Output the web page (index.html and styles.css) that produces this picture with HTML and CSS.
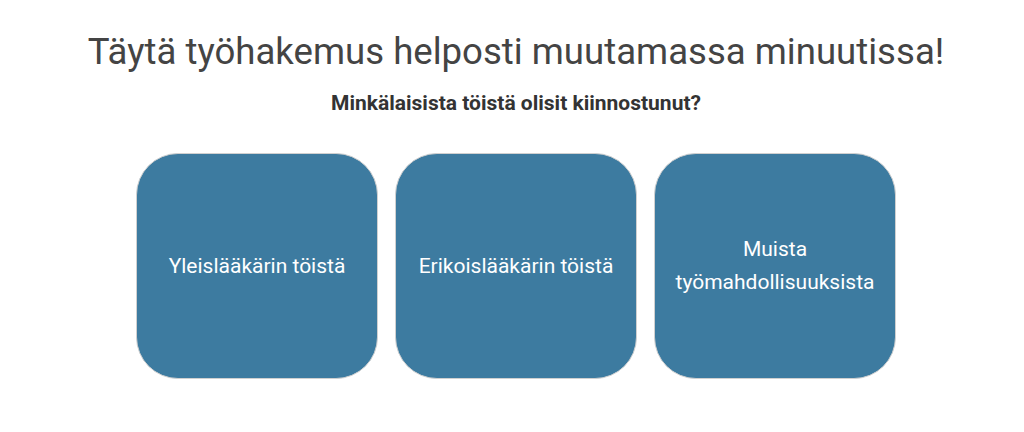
FILE: index.html
```html
<!DOCTYPE html>
<html lang="fi">
<head>
<meta charset="utf-8">
<link rel="stylesheet" href="styles.css">
</head>
<body>
<main class="page">
  <h1 class="title">Täytä työhakemus helposti muutamassa minuutissa!</h1>
  <p class="subtitle">Minkälaisista töistä olisit kiinnostunut?</p>
  <div class="cards">
    <button class="card">Yleislääkärin töistä</button>
    <button class="card">Erikoislääkärin töistä</button>
    <button class="card">Muista työmahdollisuuksista</button>
  </div>
</main>
</body>
</html>
```
FILE: styles.css
```css
html, body {
  margin: 0;
  padding: 0;
  background: #fff;
}
.page {
  font-family: Roboto, "Liberation Sans", sans-serif;
  display: flex;
  flex-direction: column;
  align-items: center;
  padding: 30px 0 0 8px;
}
.title {
  margin: 0;
  font-size: 36.6px;
  font-weight: 400;
  color: #444;
  line-height: 44px;
}
.subtitle {
  margin: 16px 0 0;
  font-size: 21px;
  font-weight: 700;
  color: #333;
  line-height: 26px;
}
.cards {
  display: flex;
  gap: 17px;
  margin-top: 37px;
}
.card {
  width: 242px;
  height: 226px;
  box-sizing: border-box;
  border: 1px solid #d0d0d0;
  border-radius: 42px;
  background: #3d7ba0;
  color: #fff;
  font-family: Roboto, "Liberation Sans", sans-serif;
  font-size: 21px;
  line-height: 33px;
  padding: 0 20px;
  display: flex;
  align-items: center;
  justify-content: center;
  text-align: center;
}
```
